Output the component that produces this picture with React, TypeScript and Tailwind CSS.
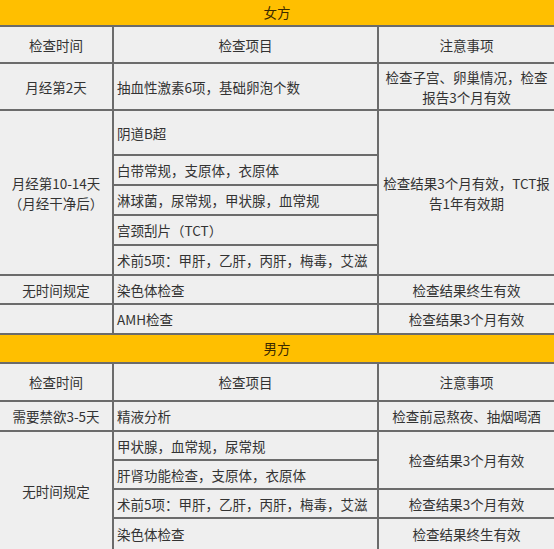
import React from 'react';

const font = { fontFamily: '"Noto Sans CJK SC", "Noto Sans", sans-serif' };

// 单元格基础样式
const cell = 'bg-[#efefef] text-[#333] text-[13.5px] leading-[20px] flex items-center';
const center = `${cell} justify-center text-center`;
const left = `${cell} pl-[3px] whitespace-nowrap`;
const band = 'col-span-3 bg-[#ffbf00] text-[#3a2a00] text-[13.5px] flex items-center justify-center';

export default function App() {
  return (
    <div style={font} className="w-[554px] h-[549px] overflow-hidden bg-white">
      <div
        className="grid grid-cols-[112px_263px_175px] gap-[2px] bg-[#6b6b6b]"
        style={{
          gridTemplateRows:
            '25px 35px 45px 43px 28px 28px 28px 28px 27px 28px 27px 36px 28px 27px 27px 27px 30px',
        }}
      >
        {/* 女方 */}
        <div className={band}>女方</div>

        <div className={center}>检查时间</div>
        <div className={center}>检查项目</div>
        <div className={center}>注意事项</div>

        <div className={center}>月经第2天</div>
        <div className={left}>抽血性激素6项，基础卵泡个数</div>
        <div className={center}>
          检查子宫、卵巢情况，检查
          <br />
          报告3个月有效
        </div>

        <div className={`${center} row-span-5 flex-col`}>
          <span>月经第10-14天</span>
          <span>（月经干净后）</span>
        </div>
        <div className={left}>阴道B超</div>
        <div className={`${center} row-span-5 col-start-3 row-start-4 flex-col`}>
          <span>检查结果3个月有效，TCT报</span>
          <span>告1年有效期</span>
        </div>
        <div className={`${left} col-start-2`}>白带常规，支原体，衣原体</div>
        <div className={`${left} col-start-2`}>淋球菌，尿常规，甲状腺，血常规</div>
        <div className={`${left} col-start-2`}>宫颈刮片（TCT）</div>
        <div className={`${left} col-start-2`}>术前5项：甲肝，乙肝，丙肝，梅毒，艾滋</div>

        <div className={center}>无时间规定</div>
        <div className={left}>染色体检查</div>
        <div className={center}>检查结果终生有效</div>

        <div className={center}></div>
        <div className={left}>AMH检查</div>
        <div className={center}>检查结果3个月有效</div>

        {/* 男方 */}
        <div className={band}>男方</div>

        <div className={center}>检查时间</div>
        <div className={center}>检查项目</div>
        <div className={center}>注意事项</div>

        <div className={center}>需要禁欲3-5天</div>
        <div className={left}>精液分析</div>
        <div className={center}>检查前忌熬夜、抽烟喝酒</div>

        <div className={`${center} row-span-4`}>无时间规定</div>
        <div className={left}>甲状腺，血常规，尿常规</div>
        <div className={`${center} row-span-2`}>检查结果3个月有效</div>
        <div className={`${left} col-start-2`}>肝肾功能检查，支原体，衣原体</div>
        <div className={`${left} col-start-2`}>术前5项：甲肝，乙肝，丙肝，梅毒，艾滋</div>
        <div className={center}>检查结果3个月有效</div>
        <div className={`${left} col-start-2`}>染色体检查</div>
        <div className={center}>检查结果终生有效</div>
      </div>
    </div>
  );
}
